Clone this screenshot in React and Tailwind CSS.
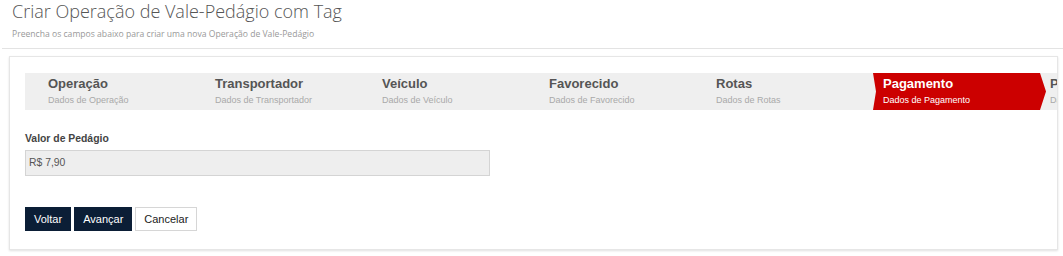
import React from "react";

const steps = [
  { title: "Operação", sub: "Dados de Operação" },
  { title: "Transportador", sub: "Dados de Transportador" },
  { title: "Veículo", sub: "Dados de Veículo" },
  { title: "Favorecido", sub: "Dados de Favorecido" },
  { title: "Rotas", sub: "Dados de Rotas" },
  { title: "Pagamento", sub: "Dados de Pagamento", active: true },
  { title: "Pesquisa", sub: "Dados de Pesquisa" },
];

function Step({ step }) {
  if (step.active) {
    return (
      <div className="relative w-[167px] shrink-0 h-full pl-[23px] pt-[3px]">
        <svg className="absolute left-[13px] top-0" width="174" height="37" viewBox="0 0 174 37">
          <polygon points="0,0 167,0 173,18.5 167,37 0,37 3,18.5" fill="#cc0000" />
        </svg>
        <div className="relative">
          <div className="text-[13px] font-bold text-white leading-[16px]">{step.title}</div>
          <div className="text-[9px] text-white leading-[13px] mt-[2px]">{step.sub}</div>
        </div>
      </div>
    );
  }
  return (
    <div className="w-[167px] shrink-0 pl-[23px] pt-[3px]">
      <div className="text-[13px] font-bold text-[#555] leading-[16px]">{step.title}</div>
      <div className="text-[9px] text-[#a9a9a9] leading-[13px] mt-[2px]">{step.sub}</div>
    </div>
  );
}

export default function App() {
  return (
    <div className="w-full overflow-hidden bg-white h-[256px]" style={{ fontFamily: "'Liberation Sans', Arial, sans-serif" }}>
      <div className="pl-[12px]" style={{ fontFamily: "'Open Sans', sans-serif" }}>
        <h1 className="text-[18px] font-light text-[#555] leading-[22px]">Criar Operação de Vale-Pedágio com Tag</h1>
        <p className="text-[8.6px] text-[#999] leading-[14px] mt-[5px]">Preencha os campos abaixo para criar uma nova Operação de Vale-Pedágio</p>
      </div>
      <div className="ml-[2px] mt-[7px] border-t border-[#e3e3e3]" />
      <div className="ml-[9px] mr-[5px] mt-[7px] border border-[#e6e6e6] shadow-[0_1px_2px_rgba(0,0,0,0.12)] h-[194px] overflow-hidden pl-[15px] pt-[16px]">
        <div className="flex bg-[#efefef] h-[37px] w-[1200px]">
          {steps.map((s) => (
            <Step key={s.title} step={s} />
          ))}
        </div>
        <div className="mt-[22px]">
          <label className="block text-[10.4px] font-bold text-[#444] leading-[14px]">Valor de Pedágio</label>
          <div className="mt-[4px] w-[465px] h-[26px] bg-[#eeeeee] border border-[#d4d4d4] flex items-center pl-[3px] text-[10.4px] text-[#555]">
            R$ 7,90
          </div>
        </div>
        <div className="flex gap-[3px] mt-[31px]">
          <button className="h-[24px] px-[9px] bg-[#0b1e36] text-white text-[11px]">Voltar</button>
          <button className="h-[24px] px-[9px] bg-[#0b1e36] text-white text-[11px]">Avançar</button>
          <button className="h-[24px] px-[8px] bg-white border border-[#d6d6d6] text-[#222] text-[11px]">Cancelar</button>
        </div>
      </div>
    </div>
  );
}
